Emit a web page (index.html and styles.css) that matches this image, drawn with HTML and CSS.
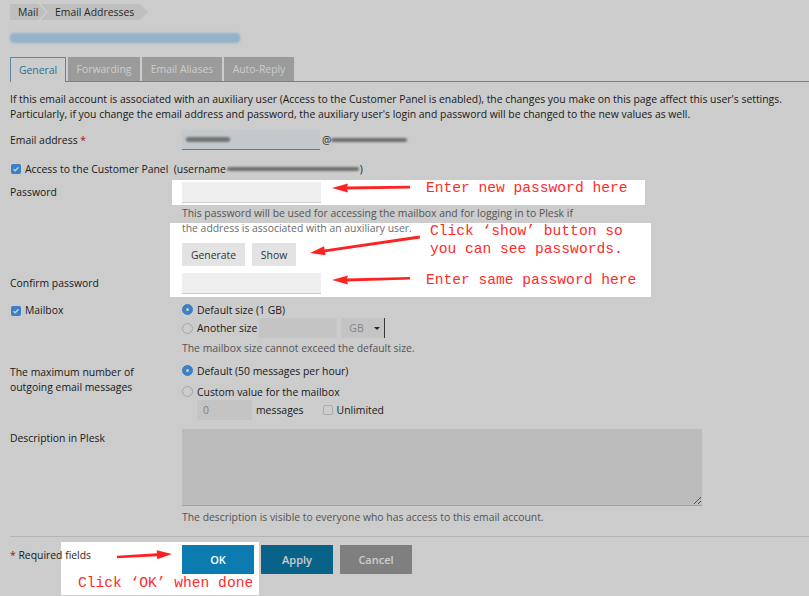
FILE: index.html
```html
<!DOCTYPE html>
<html lang="en">
<head>
    <meta charset="UTF-8">
    <meta name="viewport" content="width=device-width, initial-scale=1.0">
    <title>Email Addresses - General</title>
    <link rel="stylesheet" href="styles.css">
</head>
<body>
<div class="page">
    <nav class="crumbs">
        <span class="crumb first">Mail</span>
        <span class="crumb">Email Addresses</span>
    </nav>
    <div class="title-blur"></div>

    <div class="tabs">
        <span class="tab active">General</span>
        <span class="tab t-fwd">Forwarding</span>
        <span class="tab t-alias">Email Aliases</span>
        <span class="tab t-reply">Auto-Reply</span>
    </div>

    <p class="intro">If this email account is associated with an auxiliary user (Access to the Customer Panel is enabled), the changes you make on this page affect this user's settings.<br>Particularly, if you change the email address and password, the auxiliary user's login and password will be changed to the new values as well.</p>

    <div class="row r-email">
        <div class="lbl">Email address <span class="req">*</span></div>
        <div class="fld inline">
            <span class="input email-input"><i class="smudge s-name"></i></span>
            <span class="at">@</span><i class="smudge s-domain"></i>
        </div>
    </div>

    <div class="r-access">
        <span class="check on"><svg width="8" height="8" viewBox="0 0 8 8"><path d="M1.5 4.2 3.2 5.8 6.5 2.2" fill="none" stroke="#fff" stroke-width="1.4"/></svg></span>
        <span>Access to the Customer Panel&nbsp; (username</span><i class="smudge s-user"></i><span>)</span>
    </div>

    <div class="row r-pass">
        <div class="lbl lh20">Password</div>
        <div class="fld">
            <input class="input" type="password">
            <p class="hint h-pass">This password will be used for accessing the mailbox and for logging in to Plesk if<br>the address is associated with an auxiliary user.</p>
            <div class="btns">
                <button class="btn b-gen">Generate</button>
                <button class="btn b-show">Show</button>
            </div>
        </div>
    </div>

    <div class="row r-confirm">
        <div class="lbl lh21">Confirm password</div>
        <div class="fld"><input class="input" type="password"></div>
    </div>

    <div class="row r-mailbox">
        <div class="lbl lh17 inline">
            <span class="check on"><svg width="8" height="8" viewBox="0 0 8 8"><path d="M1.5 4.2 3.2 5.8 6.5 2.2" fill="none" stroke="#fff" stroke-width="1.4"/></svg></span>
            <span>Mailbox</span>
        </div>
        <div class="fld">
            <div class="opt h17"><span class="radio on"></span>Default size (1 GB)</div>
            <div class="opt h20"><span class="radio"></span>Another size
                <span class="input size-input"></span>
                <span class="select">GB<span class="caret"></span></span>
            </div>
            <p class="hint h-size">The mailbox size cannot exceed the default size.</p>
        </div>
    </div>

    <div class="row r-max">
        <div class="lbl lbl-two">The maximum number of<br>outgoing email messages</div>
        <div class="fld">
            <div class="opt h17"><span class="radio on"></span>Default (50 messages per hour)</div>
            <div class="opt h17 gap4"><span class="radio"></span>Custom value for the mailbox</div>
            <div class="msgs">
                <span class="input msg-input">0</span>
                <span class="msg-word">messages</span>
                <span class="check off"></span>
                <span>Unlimited</span>
            </div>
        </div>
    </div>

    <div class="row r-desc">
        <div class="lbl lbl-desc">Description in Plesk</div>
        <div class="fld">
            <textarea class="desc"></textarea>
            <p class="hint h-desc">The description is visible to everyone who has access to this email account.</p>
        </div>
    </div>

    <hr class="rule">

    <div class="row r-actions">
        <div class="lbl lh20"><span class="req">*</span> Required fields</div>
        <div class="fld inline acts">
            <button class="act ok">OK</button>
            <button class="act apply">Apply</button>
            <button class="act cancel">Cancel</button>
        </div>
    </div>

    <!-- grey dimming with the highlighted parts cut out -->
    <div class="dim"></div>

    <svg class="arrows" width="809" height="596" viewBox="0 0 809 596">
        <g fill="#f22">
            <polygon points="332,188 348,183.5 347,186.5 410,185.8 410,188.4 347,189.6 348,192.5"/>
            <polygon points="310,253 325.6,255.3 325,252.2 420,238.4 419.6,235.6 324.6,249.4 324.1,246.3"/>
            <polygon points="332,280 348,275.5 347,278.5 410,277 410,279.6 347,281.6 348,284.5"/>
            <polygon points="172,554 157.2,559.2 157,556.2 117,558.3 117,555.7 156.9,553.2 156.8,550.2"/>
        </g>
    </svg>

    <div class="note n1">Enter new password here</div>
    <div class="note n2">Click ‘show’ button so<br>you can see passwords.</div>
    <div class="note n3">Enter same password here</div>
    <div class="note n4">Click ‘OK’ when done</div>
</div>
</body>
</html>
```

FILE: styles.css
```css
body { margin: 0; background: #fff; font-family: "Open Sans", "Liberation Sans", sans-serif; font-size: 10.4px; color: #262626; }
.page { position: relative; width: 809px; height: 596px; overflow: hidden; padding: 0 0 0 10px; box-sizing: border-box; }
p { margin: 0; }

/* breadcrumbs + title */
.crumbs { display: flex; padding-top: 4px; height: 16px; }
.crumb { display: block; height: 16px; line-height: 16px; background: #efefef; color: #333; padding: 0 14px 0 14px; margin-left: -5px;
    clip-path: polygon(0 0, calc(100% - 8px) 0, 100% 50%, calc(100% - 8px) 100%, 0 100%, 7px 50%); }
.crumb.first { margin-left: 0; padding-left: 8px; width: 36px; box-sizing: border-box; clip-path: polygon(0 0, calc(100% - 8px) 0, 100% 50%, calc(100% - 8px) 100%, 0 100%); }
.title-blur { width: 230px; height: 10px; margin-top: 13px; background: #b8e0fc; border-radius: 4px; filter: blur(1.2px); }

/* tabs */
.tabs { display: flex; gap: 2px; margin-top: 14px; height: 24px; border-bottom: 1px solid #73acd0; }
.tab { height: 24px; line-height: 24px; text-align: center; background: #c2c2c2; color: #fff; box-sizing: border-box; }
.tab.active { width: 56px; background: #fff; color: #3a8ab5; border: 1px solid #73acd0; border-bottom: 0; height: 25px; margin-bottom: -1px; }
.t-fwd { width: 72px; }
.t-alias { width: 80px; }
.t-reply { width: 70px; }

.intro { margin-top: 10px; line-height: 15px; }

/* form rows */
.row { display: grid; grid-template-columns: 172px 1fr; align-items: start; }
.inline { display: flex; align-items: center; }
.lh17 { line-height: 17px; height: 17px; }
.lh20 { line-height: 20px; }
.lh21 { line-height: 21px; }
.req { color: #c42020; }
.input { display: block; width: 139px; height: 21px; box-sizing: border-box; border: 0; border-bottom: 1px solid #c7ccd0; background: #efefef; padding: 0 4px; font: inherit; outline: none; }
.hint { color: #6b6b6b; line-height: 15px; }

.r-email { margin-top: 8px; }
.r-email .lbl { line-height: 21px; }
.email-input { width: 138px; height: 20px; background: #f3fbff; border-bottom-color: #4ea5f5; display: flex; align-items: center; }
.at { margin-left: 2px; color: #333; }
.smudge { display: inline-block; height: 4px; background: #8a8a8a; border-radius: 2px; filter: blur(1px); }
.s-name { width: 44px; height: 5px; background: #8f8f8f; }
.s-domain { width: 76px; }
.s-user { width: 132px; margin: 0 1px; }

.r-access { display: flex; align-items: center; height: 16px; margin-top: 10px; padding-left: 1px; }
.check { display: inline-flex; align-items: center; justify-content: center; width: 10px; height: 10px; border-radius: 2px; box-sizing: border-box; margin-right: 4px; }
.check.on { background: #4a9ff5; }
.check.off { background: #fff; border: 1px solid #d6d6d6; }
.r-mailbox .check { margin-left: 1px; }

.r-pass { margin-top: 5px; }
.h-pass { margin-top: 3px; }
.btns { display: flex; gap: 7px; margin-top: 7px; }
.btn { height: 23px; border: 0; background: #e3e3e3; color: #333; font: inherit; padding: 0; }
.b-gen { width: 63px; }
.b-show { width: 44px; }

.r-confirm { margin-top: 7px; }

.r-mailbox { margin-top: 7px; }
.r-mailbox .lbl { line-height: 19px; height: 19px; }
.opt { display: flex; align-items: center; }
.h17 { height: 17px; }
.h20 { height: 20px; }
.gap4 { margin-top: 4px; }
.radio { width: 11px; height: 11px; border-radius: 50%; box-sizing: border-box; border: 1px solid #cfcfcf; background: #fff; margin-right: 4px; position: relative; }
.radio.on { background: #4a9ff5; border-color: #4a9ff5; }
.radio.on::after { content: ""; position: absolute; left: 3px; top: 3px; width: 3px; height: 3px; border-radius: 50%; background: #fff; }
.size-input { width: 78px; height: 20px; background: #f5f5f5; border: 0; margin-left: 2px; }
.select { position: relative; display: block; width: 44px; height: 20px; line-height: 20px; margin-left: 4px; background: #f5f5f5; color: #a8a8a8; padding-left: 8px; box-sizing: border-box; border-right: 1px solid #444; }
.caret { position: absolute; right: 4px; top: 9px; border: 3px solid transparent; border-top: 3px solid #333; border-bottom: 0; }
.h-size { margin-top: 2.5px; }

.r-max { margin-top: 6.5px; }
.lbl-two { line-height: 15px; padding-top: 3px; }
.msgs { display: flex; align-items: center; margin-left: 15px; height: 20px; }
.msg-input { width: 55px; height: 20px; line-height: 20px; background: #f5f5f5; color: #a0a0a0; border: 0; padding-left: 6px; }
.msg-word { margin-left: 4px; margin-right: 19px; }

.r-desc { margin-top: 9px; }
.lbl-desc { line-height: 15px; padding-top: 2px; }
.desc { display: block; width: 520px; height: 77px; box-sizing: border-box; border: 0; border-bottom: 1px solid #c7cccc; background: #ececec; resize: both; outline: none; margin: 0; }
.h-desc { margin-top: 3.5px; }

.rule { margin: 11.5px 0 0 0; border: 0; border-top: 1px solid #e2e2e2; height: 0; }

.r-actions { margin-top: 8px; }
.acts { gap: 7px; }
.act { width: 72px; height: 29px; border: 0; color: #fff; font: inherit; font-size: 11px; font-weight: 600; padding: 0; }
.ok { background: #0c7cb0; }
.apply { background: #0c7cac; }
.cancel { background: #9f9f9f; }

/* annotation layer */
.dim { position: absolute; left: 0; top: 0; width: 809px; height: 596px; background: rgba(0,0,0,0.2);
    clip-path: path(evenodd, "M0 0H809V596H0Z M172 180H645V205H172Z M170 223H651V297H170Z M61 542H259V595H61Z"); }
.arrows { position: absolute; left: 0; top: 0; }
.note { position: absolute; font-family: "Liberation Mono", monospace; font-size: 14.6px; line-height: 18px; color: #ff2b2b; white-space: nowrap; }
.n1 { left: 426px; top: 179px; }
.n2 { left: 430px; top: 223px; line-height: 17.5px; }
.n3 { left: 426px; top: 271px; }
.n4 { left: 78px; top: 574px; }
```
